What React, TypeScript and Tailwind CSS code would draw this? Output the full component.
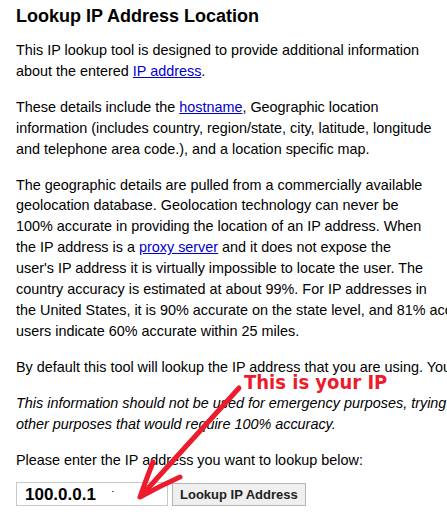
export default function App() {
  const link = 'text-[#0000cc] underline';
  const para = 'mt-[15px] text-[14.4px] leading-[20.9px]';
  return (
    <div className="relative w-[447px] h-[519px] overflow-hidden bg-white text-black font-['Liberation_Sans',Arial,sans-serif]">
      <div className="pl-4 pt-[5px] whitespace-nowrap">
        <h1 className="text-[18px] font-bold leading-[22px]">Lookup IP Address Location</h1>

        <p className="mt-[13px] text-[14.4px] leading-[20.9px]">
          This IP lookup tool is designed to provide additional information<br />
          about the entered <a className={link}>IP address</a>.
        </p>

        <p className={para}>
          These details include the <a className={link}>hostname</a>, Geographic location<br />
          information (includes country, region/state, city, latitude, longitude<br />
          and telephone area code.), and a location specific map.
        </p>

        <p className={para}>
          The geographic details are pulled from a commercially available<br />
          geolocation database. Geolocation technology can never be<br />
          100% accurate in providing the location of an IP address. When<br />
          the IP address is a <a className={link}>proxy server</a> and it does not expose the<br />
          user's IP address it is virtually impossible to locate the user. The<br />
          country accuracy is estimated at about 99%. For IP addresses in<br />
          the United States, it is 90% accurate on the state level, and 81% accurate on the city level.<br />
          users indicate 60% accurate within 25 miles.
        </p>

        <p className={para}>
          By default this tool will lookup the IP address that you are using. You can enter any other IP address.
        </p>

        <p className={para + ' italic'}>
          This information should not be used for emergency purposes, trying to find someone's exact location or<br />
          other purposes that would require 100% accuracy.
        </p>

        <p className={para}>
          Please enter the IP address you want to lookup below:
        </p>

        <div className="mt-[12px] flex items-center gap-1">
          <div className="relative w-[152px] h-[24px] border border-[#c8c8c8] flex items-center pl-2 text-[17px] font-bold">
            100.0.0.1
            <span className="absolute left-[95px] top-[8px] w-[2px] h-[1px] bg-[#2a6fd0]" />
          </div>
          <button className="h-[23px] px-[7px] bg-[#efefef] border border-[#b5b5b5] text-[13px] font-bold text-[#222]">
            Lookup IP Address
          </button>
        </div>
      </div>

      {/* annotation */}
      <div className="absolute left-[244px] top-[369px] text-[#ec1c2c] text-[20px] font-bold leading-[26px] font-['DejaVu_Sans_Condensed','DejaVu_Sans',sans-serif] whitespace-nowrap">
        This is your IP
      </div>
      <svg className="absolute left-0 top-0 pointer-events-none" width="447" height="519">
        <g stroke="#ec1c2c" strokeWidth="5" strokeLinecap="round" strokeLinejoin="round" fill="none">
          <path d="M239 388 L141 496" />
          <path d="M153 462 Q146 480 140 497 Q160 486 180 477" />
        </g>
      </svg>
    </div>
  );
}
